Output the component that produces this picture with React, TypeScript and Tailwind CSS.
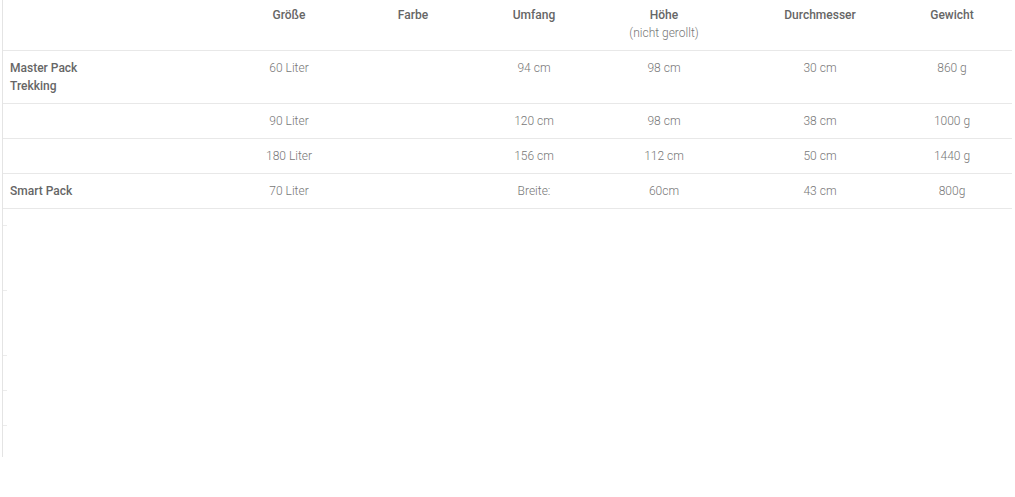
const cols = "grid grid-cols-[224px_124px_124px_118px_142px_170px_94px] pr-[13px]"

type Row = {
  name: string[]
  size: string
  color: string
  umfang: string
  hoehe: string
  durchmesser: string
  gewicht: string
}

const rows: Row[] = [
  { name: ["Master Pack", "Trekking"], size: "60 Liter", color: "", umfang: "94 cm", hoehe: "98 cm", durchmesser: "30 cm", gewicht: "860 g" },
  { name: [], size: "90 Liter", color: "", umfang: "120 cm", hoehe: "98 cm", durchmesser: "38 cm", gewicht: "1000 g" },
  { name: [], size: "180 Liter", color: "", umfang: "156 cm", hoehe: "112 cm", durchmesser: "50 cm", gewicht: "1440 g" },
  { name: ["Smart Pack"], size: "70 Liter", color: "", umfang: "Breite:", hoehe: "60cm", durchmesser: "43 cm", gewicht: "800g" },
]

const App = () => {
  return (
    <div className="w-[1015px] h-[497px] bg-white font-['Roboto',sans-serif] text-[12px] leading-[18px]">
      <div className="ml-[2px] w-[1010px] border-l border-[#e4e4e4]">
        <div className={`${cols} border-b border-[#e8e8e8] pt-[6px] pb-[8px] font-medium text-[#666]`}>
          <div />
          <div className="text-center">Größe</div>
          <div className="text-center">Farbe</div>
          <div className="text-center">Umfang</div>
          <div className="text-center">
            Höhe
            <div className="font-light text-[#777]">(nicht gerollt)</div>
          </div>
          <div className="text-center">Durchmesser</div>
          <div className="text-center">Gewicht</div>
        </div>

        {rows.map((r, i) => (
          <div key={i} className={`${cols} border-b border-[#e8e8e8] pt-[8px] pb-[8px] font-light text-[#777]`}>
            <div className="pl-[7px] font-medium text-[#666]">
              {r.name.map((n) => (
                <div key={n}>{n}</div>
              ))}
            </div>
            <div className="text-center">{r.size}</div>
            <div className="text-center">{r.color}</div>
            <div className="text-center">{r.umfang}</div>
            <div className="text-center">{r.hoehe}</div>
            <div className="text-center">{r.durchmesser}</div>
            <div className="text-center">{r.gewicht}</div>
          </div>
        ))}

        {/* empty area below the table, faint ticks on the left edge */}
        <div className="flex h-[248px] flex-col">
          <div className="h-[16px]" />
          <div className="h-px w-[4px] bg-[#ececec]" />
          <div className="h-[64px]" />
          <div className="h-px w-[4px] bg-[#ececec]" />
          <div className="h-[64px]" />
          <div className="h-px w-[4px] bg-[#ececec]" />
          <div className="h-[34px]" />
          <div className="h-px w-[4px] bg-[#ececec]" />
          <div className="h-[34px]" />
          <div className="h-px w-[4px] bg-[#ececec]" />
        </div>
      </div>
    </div>
  )
}

export default App
